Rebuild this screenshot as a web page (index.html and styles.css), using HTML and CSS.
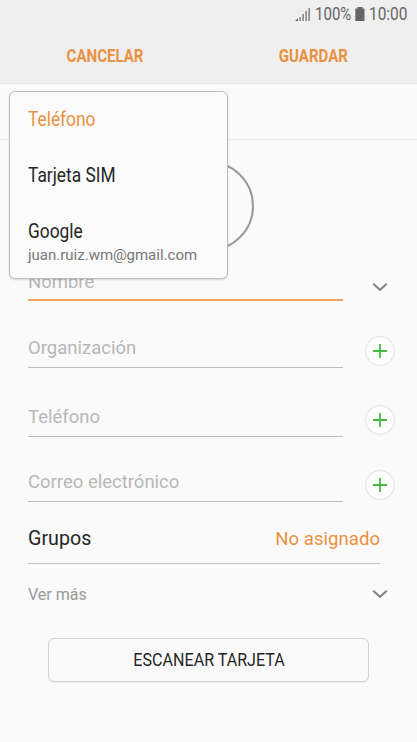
FILE: index.html
```html
<!DOCTYPE html>
<html lang="es">
<head>
<meta charset="utf-8">
<title>Contacto</title>
<link rel="stylesheet" href="styles.css">
</head>
<body>
<div class="status">
  <svg class="signal" width="15" height="15" viewBox="0 0 15 15"><path d="M0 14l3-3v3zM4.500 10h1.200v4H4.500zM7.500 7h1.200v7H7.500zM10.500 4h1.200v10h-1.200zM13.500 1h1.200v13h-1.200z"/></svg>
  <span class="battery-level"><span class="cond">100%</span></span>
  <svg class="battery" width="10" height="14" viewBox="0 0 10 14"><path d="M2.500 0h5v1.500H9.500V14H.3V1.500h2.200z"/></svg>
  <span class="clock"><span class="cond">10:00</span></span>
</div>
<header class="actions">
  <div class="action"><span class="cond cancel">CANCELAR</span></div>
  <div class="action"><span class="cond save">GUARDAR</span></div>
</header>
<div class="account"></div>
<div class="photo"><div class="avatar"></div></div>
<main class="form">
  <div class="row name">
    <div class="field"><span>Nombre</span></div>
    <svg class="chevron" width="16" height="10" viewBox="0 0 16 10"><path d="M1.200 1.800L8 7.800l6.800-6"/></svg>
  </div>
  <div class="row org">
    <div class="field"><span>Organización</span></div>
    <svg class="plus" width="30" height="30" viewBox="0 0 30 30"><circle cx="15" cy="15" r="14.500"/><path d="M8 15h14M15 8v14"/></svg>
  </div>
  <div class="row phone">
    <div class="field"><span>Teléfono</span></div>
    <svg class="plus" width="30" height="30" viewBox="0 0 30 30"><circle cx="15" cy="15" r="14.500"/><path d="M8 15h14M15 8v14"/></svg>
  </div>
  <div class="row mail">
    <div class="field"><span>Correo electrónico</span></div>
    <svg class="plus" width="30" height="30" viewBox="0 0 30 30"><circle cx="15" cy="15" r="14.500"/><path d="M8 15h14M15 8v14"/></svg>
  </div>
  <div class="groups"><span>Grupos</span><span class="value">No asignado</span></div>
  <div class="more"><span>Ver más</span>
    <svg class="chevron" width="16" height="10" viewBox="0 0 16 10"><path d="M1.200 1.800L8 7.800l6.800-6"/></svg>
  </div>
  <button class="scan"><span class="cond">ESCANEAR TARJETA</span></button>
</main>
<div class="menu">
  <div class="item selected"><span class="cond">Teléfono</span></div>
  <div class="item"><span class="cond">Tarjeta SIM</span></div>
  <div class="item"><span class="cond">Google</span></div>
  <div class="mail-address">juan.ruiz.wm@gmail.com</div>
</div>
</body>
</html>
```
FILE: styles.css
```css
* { box-sizing: border-box; }
body {
  margin: 0;
  width: 417px;
  height: 742px;
  overflow: hidden;
  position: relative;
  background: #fafafa;
  color: #252525;
  font-family: Roboto, "Liberation Sans", sans-serif;
}
svg { display: block; flex: none; }
.cond {
  display: inline-block;
  white-space: nowrap;
  transform: scaleX(.88);
  transform-origin: left center;
}
.status {
  height: 28px;
  background: #efefef;
  display: flex;
  align-items: center;
  padding-left: 295px;
  color: #666;
  font-size: 17.500px;
  line-height: 29px;
}
.status path { fill: #666; }
.signal { margin-right: 5px; }
.battery-level { width: 40px; }
.battery-level .cond { transform: scaleX(.86); }
.battery { margin-right: 4px; }
.clock { width: 46px; }
.actions {
  height: 56px;
  background: #efefef;
  border-bottom: 1px solid #e4e4e4;
  display: grid;
  grid-template-columns: 1fr 1fr;
}
.action {
  text-align: center;
  color: #e99244;
  font-weight: 700;
  font-size: 18px;
  line-height: 56px;
}
.action .cond { transform: scaleX(.835); transform-origin: center; }
.action .cancel { margin-left: 2px; }
.action .save { margin-left: 1px; }
.account { height: 56px; border-bottom: 1px solid #ebebeb; }
.photo { height: 127px; padding-top: 21px; }
.avatar {
  width: 90px;
  height: 90px;
  margin-left: 164px;
  border: 2px solid #999;
  border-radius: 50%;
}
.form { padding: 0 22px 0 28px; }
.row { display: flex; justify-content: space-between; align-items: flex-end; }
.field {
  width: 315px;
  height: 100%;
  border-bottom: 1px solid #bdbdbd;
  color: #b7b7b7;
  font-size: 18.500px;
  line-height: 22px;
  display: flex;
  align-items: flex-end;
  padding-bottom: 8px;
}
.name { height: 34px; }
.name .field { border-bottom: 2px solid #f0a55f; padding-bottom: 6px; }
.org { height: 67px; }
.phone { height: 69px; }
.mail { height: 65px; }
.plus { margin-bottom: 2px; }
.plus circle { fill: #fefefe; stroke: #dfdfdf; }
.plus path { stroke: #49b93b; stroke-width: 1.800; }
.chevron path { fill: none; stroke: #858585; stroke-width: 2; }
.name .chevron { margin: 0 7px 9px 0; }
.groups {
  width: 352px;
  height: 62px;
  border-bottom: 1px solid #c2c2c2;
  display: flex;
  justify-content: space-between;
  padding-top: 24px;
  font-size: 19.700px;
  line-height: 25px;
}
.value { color: #e99244; font-size: 18.600px; line-height: 27px; }
.more {
  height: 60px;
  display: flex;
  justify-content: space-between;
  align-items: center;
  padding-right: 7px;
  color: #999;
  font-size: 16px;
}
.scan {
  display: block;
  width: 321px;
  height: 44px;
  margin: 14px 0 0 20px;
  padding: 0 0 0 1px;
  border: 1px solid #d4d4d4;
  border-radius: 6px;
  background: #fafafa;
  box-shadow: 0 1px 0 rgba(0, 0, 0, .05);
  color: #252525;
  font: 400 18.500px Roboto, sans-serif;
}
.scan .cond { transform: scaleX(.87); transform-origin: center; }
.menu {
  position: absolute;
  left: 9px;
  top: 91px;
  width: 219px;
  height: 188px;
  padding: 0 18px;
  background: #fbfbfb;
  border: 1px solid #bdbdbd;
  border-radius: 6px;
  box-shadow: 0 1px 2px rgba(0, 0, 0, .14);
}
.menu .item { height: 56px; line-height: 56px; font-size: 19.700px; }
.menu .selected { color: #e99244; }
.mail-address { margin-top: -14px; color: #777; font-size: 15px; line-height: 18px; }
```
